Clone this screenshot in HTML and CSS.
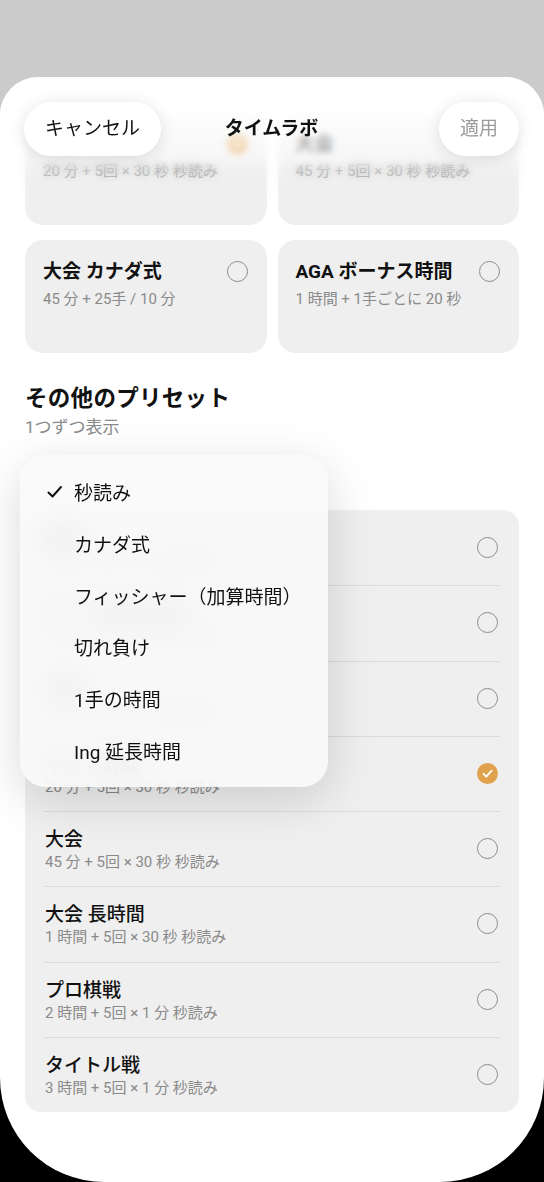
FILE: index.html
```html
<!DOCTYPE html>
<html lang="ja">
<head>
<meta charset="utf-8">
<title>タイムラボ</title>
<link rel="stylesheet" href="styles.css">
</head>
<body>
<div class="screen">
  <div class="sheet">
    <div class="content">
      <div class="grid">
        <div class="card">
          <div class="card-text">
            <div class="card-title">ネット対局</div>
            <div class="sub">20 分 + 5回 × 30 秒 秒読み</div>
          </div>
          <span class="radio checked"><svg viewBox="0 0 21 21" width="21" height="21"><polyline points="6.5,10.8 9.3,13.6 14.6,7.6" fill="none" stroke="#fff" stroke-width="1.8" stroke-linecap="round" stroke-linejoin="round"/></svg></span>
        </div>
        <div class="card">
          <div class="card-text">
            <div class="card-title">大会</div>
            <div class="sub">45 分 + 5回 × 30 秒 秒読み</div>
          </div>
          <span class="radio"></span>
        </div>
        <div class="card">
          <div class="card-text">
            <div class="card-title">大会 カナダ式</div>
            <div class="sub">45 分 + 25手 / 10 分</div>
          </div>
          <span class="radio"></span>
        </div>
        <div class="card">
          <div class="card-text">
            <div class="card-title">AGA ボーナス時間</div>
            <div class="sub">1 時間 + 1手ごとに 20 秒</div>
          </div>
          <span class="radio"></span>
        </div>
      </div>

      <div class="section">
        <h2 class="section-title">その他のプリセット</h2>
        <div class="section-sub">1つずつ表示</div>
      </div>

      <div class="list">
        <div class="row">
          <div class="row-text"><div class="row-title">練習</div><div class="sub">10 分 + 3回 × 10 秒 秒読み</div></div>
          <span class="radio"></span>
        </div>
        <div class="row">
          <div class="row-text"><div class="row-title">ネット対局 早碁</div><div class="sub">10 分 + 5回 × 30 秒 秒読み</div></div>
          <span class="radio"></span>
        </div>
        <div class="row">
          <div class="row-text"><div class="row-title">早碁</div><div class="sub">15 分 + 5回 × 30 秒 秒読み</div></div>
          <span class="radio"></span>
        </div>
        <div class="row">
          <div class="row-text"><div class="row-title">ネット対局</div><div class="sub">20 分 + 5回 × 30 秒 秒読み</div></div>
          <span class="radio checked"><svg viewBox="0 0 21 21" width="21" height="21"><polyline points="6.5,10.8 9.3,13.6 14.6,7.6" fill="none" stroke="#fff" stroke-width="1.8" stroke-linecap="round" stroke-linejoin="round"/></svg></span>
        </div>
        <div class="row">
          <div class="row-text"><div class="row-title">大会</div><div class="sub">45 分 + 5回 × 30 秒 秒読み</div></div>
          <span class="radio"></span>
        </div>
        <div class="row">
          <div class="row-text"><div class="row-title">大会 長時間</div><div class="sub">1 時間 + 5回 × 30 秒 秒読み</div></div>
          <span class="radio"></span>
        </div>
        <div class="row">
          <div class="row-text"><div class="row-title">プロ棋戦</div><div class="sub">2 時間 + 5回 × 1 分 秒読み</div></div>
          <span class="radio"></span>
        </div>
        <div class="row">
          <div class="row-text"><div class="row-title">タイトル戦</div><div class="sub">3 時間 + 5回 × 1 分 秒読み</div></div>
          <span class="radio"></span>
        </div>
      </div>
    </div>

    <div class="fade"></div>
    <div class="topbar">
      <button class="pill cancel">キャンセル</button>
      <div class="title">タイムラボ</div>
      <button class="pill apply">適用</button>
    </div>

    <div class="menu">
      <div class="menu-item"><svg class="check" viewBox="0 0 16 14" width="16" height="14"><polyline points="1.5,7.5 5.5,11.5 14,2" fill="none" stroke="#111" stroke-width="2" stroke-linecap="round" stroke-linejoin="round"/></svg><span>秒読み</span></div>
      <div class="menu-item"><span class="check"></span><span>カナダ式</span></div>
      <div class="menu-item"><span class="check"></span><span>フィッシャー（加算時間）</span></div>
      <div class="menu-item"><span class="check"></span><span>切れ負け</span></div>
      <div class="menu-item"><span class="check"></span><span>1手の時間</span></div>
      <div class="menu-item"><span class="check"></span><span>Ing 延長時間</span></div>
    </div>
  </div>
</div>
</body>
</html>
```

FILE: styles.css
```css
* { box-sizing: border-box; }
html, body { margin: 0; padding: 0; }
body {
  width: 544px;
  height: 1182px;
  overflow: hidden;
  background: linear-gradient(#cbcbcb 0 50%, #000 50% 100%);
  font-family: "Roboto", "Noto Sans CJK JP", sans-serif;
  color: #111;
}
.screen { padding-top: 77px; }
.sheet {
  position: relative;
  height: 1105px;
  background: #fff;
  border-radius: 38px 38px 104px 104px;
  overflow: hidden;
}
.content { padding-top: 35px; }

.grid {
  display: grid;
  grid-template-columns: 1fr 1fr;
  gap: 15px 11px;
  padding: 0 25px;
}
.card {
  height: 113px;
  background: #efefef;
  border-radius: 18px;
  padding: 19px 19px 0 18px;
  display: flex;
  justify-content: space-between;
  align-items: flex-start;
}
.card-title {
  font-size: 19px;
  line-height: 26px;
  font-weight: 700;
  color: #111;
}
.sub {
  font-size: 15px;
  line-height: 20px;
  color: #8a8a8a;
}
.card .sub { margin-top: 4px; }
.card .radio { margin-top: 2px; }

.radio {
  flex: none;
  width: 21px;
  height: 21px;
  border-radius: 50%;
  border: 1.6px solid #8c8c8c;
  display: block;
}
.radio.checked {
  border: none;
  background: #e0a24c;
}
.radio svg { display: block; }

.section { padding: 0 25px; margin-top: 30px; }
.section-title {
  margin: 0;
  font-size: 22.5px;
  line-height: 30px;
  font-weight: 700;
  color: #111;
  letter-spacing: 0.3px;
}
.section-sub {
  margin-top: 3px;
  font-size: 17px;
  line-height: 22px;
  color: #8a8a8a;
}

.list {
  margin: 72px 25px 0;
  background: #efefef;
  border-radius: 16px;
  overflow: hidden;
}
.row {
  position: relative;
  height: 75.25px;
  padding: 17px 21px 0 20px;
  display: flex;
  justify-content: space-between;
  align-items: flex-start;
}
.row + .row::before {
  content: "";
  position: absolute;
  top: 0;
  left: 19px;
  right: 19px;
  height: 1px;
  background: #dadada;
}
.row-title {
  font-size: 19px;
  line-height: 24px;
  font-weight: 500;
  color: #111;
}
.row .radio { margin-top: 10px; }

.fade {
  position: absolute;
  top: 0;
  left: 0;
  right: 0;
  height: 150px;
  background: linear-gradient(to bottom,
    rgba(255,255,255,1) 0px,
    rgba(255,255,255,0.93) 30px,
    rgba(255,255,255,0.62) 66px,
    rgba(255,255,255,0.28) 96px,
    rgba(255,255,255,0) 135px);
  backdrop-filter: blur(3px);
  -webkit-backdrop-filter: blur(3px);
  -webkit-mask-image: linear-gradient(to bottom, #000 0, #000 80px, rgba(0,0,0,0.5) 100px, transparent 140px);
  mask-image: linear-gradient(to bottom, #000 0, #000 80px, rgba(0,0,0,0.5) 100px, transparent 140px);
}
.topbar {
  position: absolute;
  top: 0;
  left: 0;
  right: 0;
  padding: 25px 25px 0 24px;
  display: grid;
  grid-template-columns: 1fr auto 1fr;
  align-items: center;
}
.pill {
  height: 54px;
  border: none;
  border-radius: 27px;
  background: #fff;
  box-shadow: 0 2px 16px rgba(0,0,0,0.12);
  font-family: inherit;
  font-size: 19px;
  line-height: 54px;
  padding: 0 21px;
  color: #111;
}
.cancel { justify-self: start; }
.apply { justify-self: end; color: #9b9b9b; }
.title {
  font-size: 19px;
  font-weight: 700;
  line-height: 54px;
  color: #111;
}

.menu {
  position: absolute;
  left: 20px;
  top: 378px;
  width: 308px;
  padding: 11px 0;
  border-radius: 26px;
  background: rgba(249,249,249,0.88);
  backdrop-filter: blur(14px);
  -webkit-backdrop-filter: blur(14px);
  box-shadow: 0 12px 48px rgba(0,0,0,0.15), 0 0 1px rgba(0,0,0,0.06);
}
.menu-item {
  height: 51.7px;
  display: flex;
  align-items: center;
  padding-left: 27px;
  font-size: 19px;
  color: #111;
}
.check {
  flex: none;
  width: 16px;
  height: 14px;
  margin-right: 11px;
  display: block;
}
```
